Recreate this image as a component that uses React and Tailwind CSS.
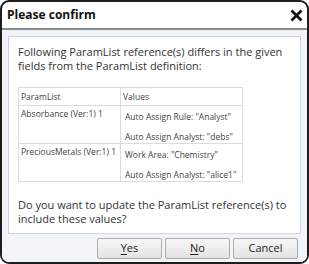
export default function App() {
  const rows = [
    { name: "Absorbance (Ver:1) 1", values: ['Auto Assign Rule: "Analyst"', 'Auto Assign Analyst: "debs"'] },
    { name: "PreciousMetals (Ver:1) 1", values: ['Work Area: "Chemistry"', 'Auto Assign Analyst: "alice1"'] },
  ];

  return (
    <div
      className="w-[309px] h-[264px] bg-white border-2 border-[#1e1e1e] rounded-[9px] flex flex-col overflow-hidden text-[#333]"
      style={{ fontFamily: '"Open Sans", "Noto Sans", sans-serif' }}
    >
      {/* Title bar */}
      <div className="h-[26px] shrink-0 flex items-center justify-between pl-[5px] pr-[4px]">
        <span className="text-[12px] font-bold text-[#111]">Please confirm</span>
        <svg width="13" height="13" viewBox="0 0 13 13" className="mt-[1px]">
          <path d="M1.5 1.5 L11.5 11.5 M11.5 1.5 L1.5 11.5" stroke="#111" strokeWidth="2.8" strokeLinecap="butt" />
        </svg>
      </div>
      <div className="h-[2px] shrink-0 bg-[#8c8c8c]" />

      {/* Body */}
      <div className="flex-1 bg-[#f1f5f9] flex flex-col px-[6px] pt-[6px]">
        <div className="border border-[#c9d7e6] bg-white pl-[9px] pr-[8px] pt-[8px] pb-[7px] text-[11px] leading-[14px]">
          <p>Following ParamList reference(s) differs in the given fields from the ParamList definition:</p>

          <table className="mt-[14px] w-[225px] border-collapse text-[8.5px] leading-[12px] text-[#444] whitespace-nowrap">
            <tbody>
              <tr>
                <td className="w-[102px] h-[18px] p-0 border border-[#dcdcdc] px-[2px] align-middle">ParamList</td>
                <td className="h-[18px] p-0 border border-[#dcdcdc] px-[2px] align-middle">Values</td>
              </tr>
              {rows.map((r) => (
                <tr key={r.name}>
                  <td className="h-[38px] p-0 border border-[#dcdcdc] px-[2px] align-top">
                    <div className="pt-[2px]">{r.name}</div>
                  </td>
                  <td className="h-[38px] p-0 border border-[#dcdcdc] pl-[4px] align-top">
                    <div className="pt-[5px]">
                      <div className="h-[20px]">{r.values[0]}</div>
                      <div className="h-[12px]">{r.values[1]}</div>
                    </div>
                  </td>
                </tr>
              ))}
            </tbody>
          </table>

          <p className="mt-[16px]">Do you want to update the ParamList reference(s) to include these values?</p>
        </div>

        {/* Buttons */}
        <div className="flex justify-end gap-[3px] pt-[4px] pr-[3px]">
          {[
            { key: "Y", rest: "es" },
            { key: "N", rest: "o" },
            { key: "", rest: "Cancel" },
          ].map((b) => (
            <button
              key={b.rest}
              className="w-[65px] h-[21px] rounded-[2px] border border-[#acacac] bg-gradient-to-b from-[#f7f7f7] to-[#e3e3e3] text-[11px] text-[#222] flex items-center justify-center"
            >
              {b.key && <span className="underline underline-offset-2">{b.key}</span>}
              {b.rest}
            </button>
          ))}
        </div>
      </div>
    </div>
  );
}
